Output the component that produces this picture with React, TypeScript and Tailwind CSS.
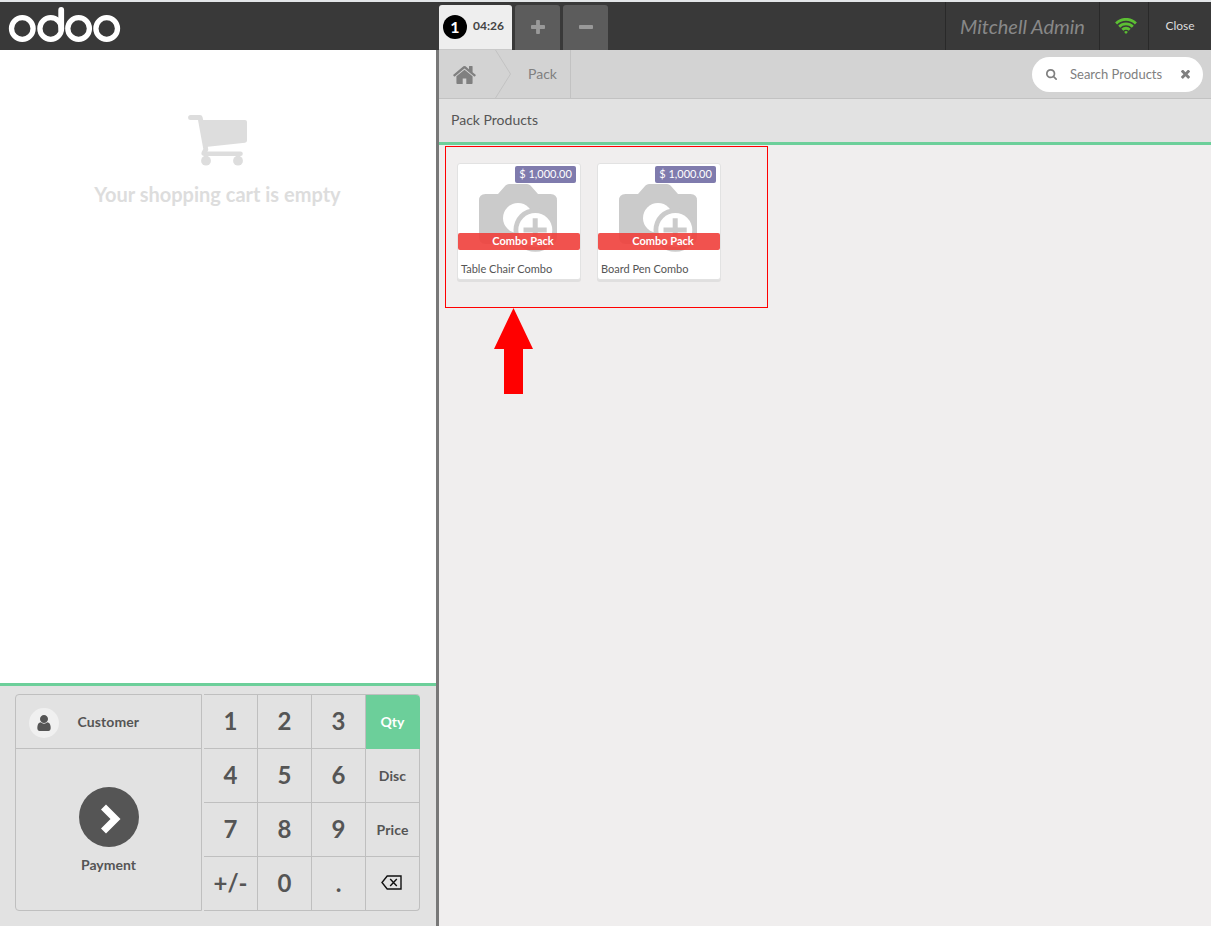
import React from "react";

const HOME =
  "M1472 992v480q0 26-19 45t-45 19h-384v-384h-256v384h-384q-26 0-45-19t-19-45v-480q0-1 .5-3t.5-3l575-474 575 474q1 2 1 6zm223-69l-62 74q-8 9-21 11h-3q-13 0-21-7l-692-577-692 577q-12 8-24 7-13-2-21-11l-62-74q-8-10-7-23.5t11-21.5l719-599q32-26 76-26t76 26l244 204v-195q0-14 9-23t23-9h192q14 0 23 9t9 23v408l219 182q10 8 11 21.5t-7 23.5z";
const PLUS =
  "M1600 736v192q0 40-28 68t-68 28h-416v416q0 40-28 68t-68 28h-192q-40 0-68-28t-28-68v-416h-416q-40 0-68-28t-28-68v-192q0-40 28-68t68-28h416v-416q0-40 28-68t68-28h192q40 0 68 28t28 68v416h416q40 0 68 28t28 68z";
const MINUS =
  "M1600 736v192q0 40-28 68t-68 28h-1216q-40 0-68-28t-28-68v-192q0-40 28-68t68-28h1216q40 0 68 28t28 68z";
const SEARCH =
  "M1216 832q0-185-131.5-316.5t-316.5-131.5-316.5 131.5-131.5 316.5 131.5 316.5 316.5 131.5 316.5-131.5 131.5-316.5zm512 832q0 52-38 90t-90 38q-54 0-90-38l-343-342q-179 124-399 124-143 0-273.5-55.5t-225-150-150-225-55.5-273.5 55.5-273.5 150-225 225-150 273.5-55.5 273.5 55.5 225 150 150 225 55.5 273.5q0 220-124 399l343 343q37 37 37 90z";
const TIMES =
  "M1490 1322q0 40-28 68l-136 136q-28 28-68 28t-68-28l-294-294-294 294q-28 28-68 28t-68-28l-136-136q-28-28-28-68t28-68l294-294-294-294q-28-28-28-68t28-68l136-136q28-28 68-28t68 28l294 294 294-294q28-28 68-28t68 28l136 136q28 28 28 68t-28 68l-294 294 294 294q28 28 28 68z";
const USER =
  "M1536 1399q0 109-62.5 187t-150.5 78h-854q-88 0-150.5-78t-62.5-187q0-85 8.5-160.5t31.5-152 58.5-131 94-89 134.5-34.5q131 128 313 128t313-128q76 0 134.5 34.5t94 89 58.5 131 31.5 152 8.5 160.5zm-256-887q0 159-112.5 271.5t-271.5 112.5-271.5-112.5-112.5-271.5 112.5-271.5 271.5-112.5 271.5 112.5 112.5 271.5z";

function Icon({ path, box, className }: { path: string; box: string; className: string }) {
  return (
    <svg viewBox={box} className={className} fill="currentColor" aria-hidden="true">
      <path d={path} />
    </svg>
  );
}

function Logo() {
  return (
    <svg viewBox="0 0 124 48" className="h-[48px] w-[124px]" fill="none" stroke="#fff" strokeWidth="5.3">
      <circle cx="22.3" cy="26.5" r="10.8" />
      <circle cx="50.7" cy="26.5" r="10.8" />
      <circle cx="78.6" cy="26.5" r="10.8" />
      <circle cx="106.7" cy="26.5" r="10.8" />
      <path d="M61.2 8V27" strokeWidth="5.8" strokeLinecap="round" />
    </svg>
  );
}

function Wifi() {
  return (
    <svg viewBox="0 0 22 16" className="h-[16px] w-[22px]" fill="none" stroke="#5cbf33" strokeWidth="2.8">
      <path d="M1.1 5.4a14 14 0 0 1 19.800 0" />
      <path d="M4.200 8.700a9.600 9.600 0 0 1 13.600 0" />
      <path d="M7.300 11.800a5.200 5.200 0 0 1 7.400 0" />
      <path d="M11 16l-1.900-2a2.700 2.700 0 0 1 3.800 0z" fill="#5cbf33" stroke="none" />
    </svg>
  );
}

function CartIcon() {
  return (
    <svg viewBox="0 0 60 52" className="h-[52px] w-[60px]" fill="#ddd">
      <path d="M2.600 0H12q2 0 2.500 2l.7 3H57q2 0 2 2v18.500q0 2-2 2.200L19.800 31.700l.5 3.200-1 1.600H52.500a2.300 2.300 0 0 1 0 4.600H16q-3.500-.5-2.300-4l1.600-3.200L10 5H2.600a2.500 2.500 0 0 1 0-5z" />
      <circle cx="18" cy="45.700" r="4.900" />
      <circle cx="50" cy="45.700" r="4.900" />
    </svg>
  );
}

function CameraPlaceholder() {
  return (
    <svg viewBox="0 0 78 68" className="h-[68px] w-[78px]">
      <path d="M6 10H19L26.500 1.500Q28 0 30 0H48Q50 0 51.500 1.500L59 10H71.500Q78 10 78 16.500V53Q78 60 71.500 60H6.500Q0 60 0 53V16.500Q0 10 6.500 10Z" fill="#cbcbcb" />
      <circle cx="39" cy="34" r="15" fill="#fff" />
      <circle cx="56.300" cy="46" r="21.800" fill="#cbcbcb" />
      <circle cx="56.300" cy="46" r="17" fill="#fff" />
      <path d="M53.700 34.200h5v9.200H67.700v5h-9v9h-5v-9h-9.200v-5h9.200z" fill="#cbcbcb" />
    </svg>
  );
}

function ProductCard({ name }: { name: string }) {
  return (
    <article className="relative flex h-[117px] w-[124px] flex-col rounded-[3px] border border-[#e2e2e2] bg-white shadow-[0_2px_0_#e0dfdf]">
      <div className="flex justify-center pr-[3px] pt-[20px]">
        <CameraPlaceholder />
      </div>
      <span className="absolute right-[4px] top-[2px] h-[17px] w-[61px] rounded-[2px] bg-[#7f7bad] text-center text-[11px] leading-[16px] text-white">
        $ 1,000.00
      </span>
      <span className="absolute inset-x-0 top-[69px] h-[17px] rounded-[2px] bg-[#ef3f3b]/90 pl-[8px] text-center text-[11px] font-bold leading-[16px] text-white">
        Combo Pack
      </span>
      <span className="mt-[9px] whitespace-nowrap pl-[3px] text-[11px] leading-[16px] text-[#555]">{name}</span>
    </article>
  );
}

const KEYS = ["1", "2", "3", "Qty", "4", "5", "6", "Disc", "7", "8", "9", "Price", "+/-", "0", ".", "back"];

function Key({ label }: { label: string }) {
  const base = "flex items-center justify-center border-b border-r border-[#bfbfbf] ";
  if (label === "back") {
    return (
      <button className={base + "rounded-br-[4px] pb-[2px] pr-[2px]"}>
        <svg viewBox="0 0 21 15" className="h-[15px] w-[21px]" fill="none" stroke="#111" strokeWidth="1.400">
          <path d="M6.200 1H20v13H6.200L1 7.500z" />
          <path d="M9.200 4l6.600 7M15.800 4l-6.600 7" />
        </svg>
      </button>
    );
  }
  if (label === "Qty") {
    return (
      <button className="flex items-center justify-center rounded-tr-[4px] bg-[#6ccf9a] pb-[2px] pr-[1px] text-[14px] font-bold text-white">Qty</button>
    );
  }
  const mode = label === "Disc" || label === "Price";
  return <button className={base + (mode ? "text-[14px] font-bold tracking-[0.1px]" : "pb-px text-[24px] font-bold")}>{label}</button>;
}

function OrderPane() {
  return (
    <section className="flex w-[436px] flex-col bg-white">
      <div className="flex flex-1 flex-col items-center pr-[1px] pt-[65px]">
        <CartIcon />
        <p className="mt-[14px] text-[20px] font-bold leading-[26px] text-[#ddd]">Your shopping cart is empty</p>
      </div>
      <div className="flex h-[243px] border-t-[3px] border-[#6ccf9a] bg-[#e2e2e2] pl-[15px] pt-[8px] text-[#555]">
        <div className="flex h-[217px] w-[187px] flex-col rounded-l-[4px] border border-[#bfbfbf]">
          <button className="flex h-[54px] items-center border-b border-[#bfbfbf] pl-[13px] text-[14px] font-bold tracking-[0.1px]">
            <span className="mr-[18.500px] mt-[3px] flex h-[30px] w-[30px] items-center justify-center rounded-full bg-[#f0f0f0]">
              <Icon path={USER} box="256 128 1280 1536" className="mb-px h-[16px] w-[14px]" />
            </span>
            Customer
          </button>
          <button className="flex flex-1 flex-col items-center pt-[38px] text-[14px] font-bold">
            <span className="flex h-[60px] w-[60px] items-center justify-center rounded-full bg-[#555]">
              <svg viewBox="0 0 20 30" className="ml-[4px] mt-[3px] h-[30px] w-[20px]">
                <path d="M0 5.500L5 .5 19.500 15 5 29.500 0 24.500 9.500 15z" fill="#fff" />
              </svg>
            </span>
            <span className="mt-[8px] leading-[20px]">Payment</span>
          </button>
        </div>
        <div className="ml-[2px] grid h-[217px] w-[216px] grid-cols-4 grid-rows-4 rounded-r-[4px] border-t border-[#bfbfbf]">
          {KEYS.map((k) => (
            <Key key={k} label={k} />
          ))}
        </div>
      </div>
    </section>
  );
}

function ProductPane() {
  return (
    <section className="flex flex-1 flex-col bg-[#f0eeee]">
      <nav className="flex h-[49px] items-center border-b border-[#c2c2c2] bg-[#d3d3d3] pr-[8px]">
        <Icon path={HOME} box="88 253 1616 1283" className="ml-[14px] mt-[2px] h-[18px] w-[23px] text-[#808080]" />
        <svg viewBox="0 0 17 48" className="ml-[19px] h-[48px] w-[17px]" fill="none" stroke="#c2c2c2">
          <path d="M.5 0L15.500 24 .5 48" />
        </svg>
        <span className="flex h-full w-[59px] items-center justify-end border-r border-[#c2c2c2] pb-[2px] pr-[13px] text-[14px] text-[#808080]">Pack</span>
        <div className="ml-auto flex h-[35px] w-[171px] items-center rounded-full bg-white text-[#808080]">
          <Icon path={SEARCH} box="64 128 1664 1664" className="ml-[14px] h-[11px] w-[11px]" />
          <span className="ml-[13px] whitespace-nowrap pt-[2px] text-[13px]">Search Products</span>
          <Icon path={TIMES} box="302 434 1188 1120" className="ml-auto mr-[13px] h-[9px] w-[9px]" />
        </div>
      </nav>
      <div className="h-[46px] border-b-[3px] border-[#6ccf9a] bg-[#e2e2e2] pl-[12px] text-[14px] leading-[42px] text-[#555]">Pack Products</div>
      <div className="ml-[6px] mt-px flex h-[162px] w-[323px] gap-[16px] border border-[#f00] pl-[11px] pt-[16px]">
        <ProductCard name="Table Chair Combo" />
        <ProductCard name="Board Pen Combo" />
      </div>
      <svg viewBox="0 0 40 86" className="ml-[55px] h-[86px] w-[40px]" fill="#f00">
        <path d="M19.500 0L39 41H29v45H10V41H0z" />
      </svg>
    </section>
  );
}

export default function App() {
  return (
    <div className="flex h-[926px] w-[1211px] flex-col overflow-hidden font-['Lato',sans-serif]">
      <header className="flex h-[50px] border-t-2 border-[#e3e6e8] bg-[#393939]">
        <Logo />
        <div className="ml-[315px] flex items-end gap-[3px]">
          <div className="flex h-[45px] w-[73px] items-center rounded-t-[3px] border-b border-[#c9c9c9] bg-[#eee] pl-[4px]">
            <span className="flex h-[24px] w-[24px] items-center justify-center rounded-full bg-black text-[16px] font-bold text-white">1</span>
            <span className="mb-[2px] ml-[6px] text-[12px] font-bold text-[#444]">04:26</span>
          </div>
          <button className="flex h-[45px] w-[45px] items-center justify-center rounded-t-[3px] bg-[#5c5c5c] pb-[2px] text-[#999]">
            <Icon path={PLUS} box="192 128 1408 1408" className="h-[14px] w-[14px]" />
          </button>
          <button className="flex h-[45px] w-[45px] items-center justify-center rounded-t-[3px] bg-[#5c5c5c] pb-[2px] text-[#999]">
            <Icon path={MINUS} box="192 640 1408 384" className="h-[4px] w-[14px]" />
          </button>
        </div>
        <div className="ml-auto flex">
          <span className="flex w-[154px] items-center justify-center border-l border-[#292929] text-[20px] italic text-[#888]">Mitchell Admin</span>
          <span className="flex w-[49px] items-center justify-center border-l border-[#292929] pl-[4px]">
            <Wifi />
          </span>
          <span className="flex w-[63px] items-center justify-center border-l border-[#292929] text-[12px] text-[#ddd]">Close</span>
        </div>
      </header>
      <main className="flex flex-1">
        <OrderPane />
        <div className="w-[3px] bg-[#787878]" />
        <ProductPane />
      </main>
    </div>
  );
}
